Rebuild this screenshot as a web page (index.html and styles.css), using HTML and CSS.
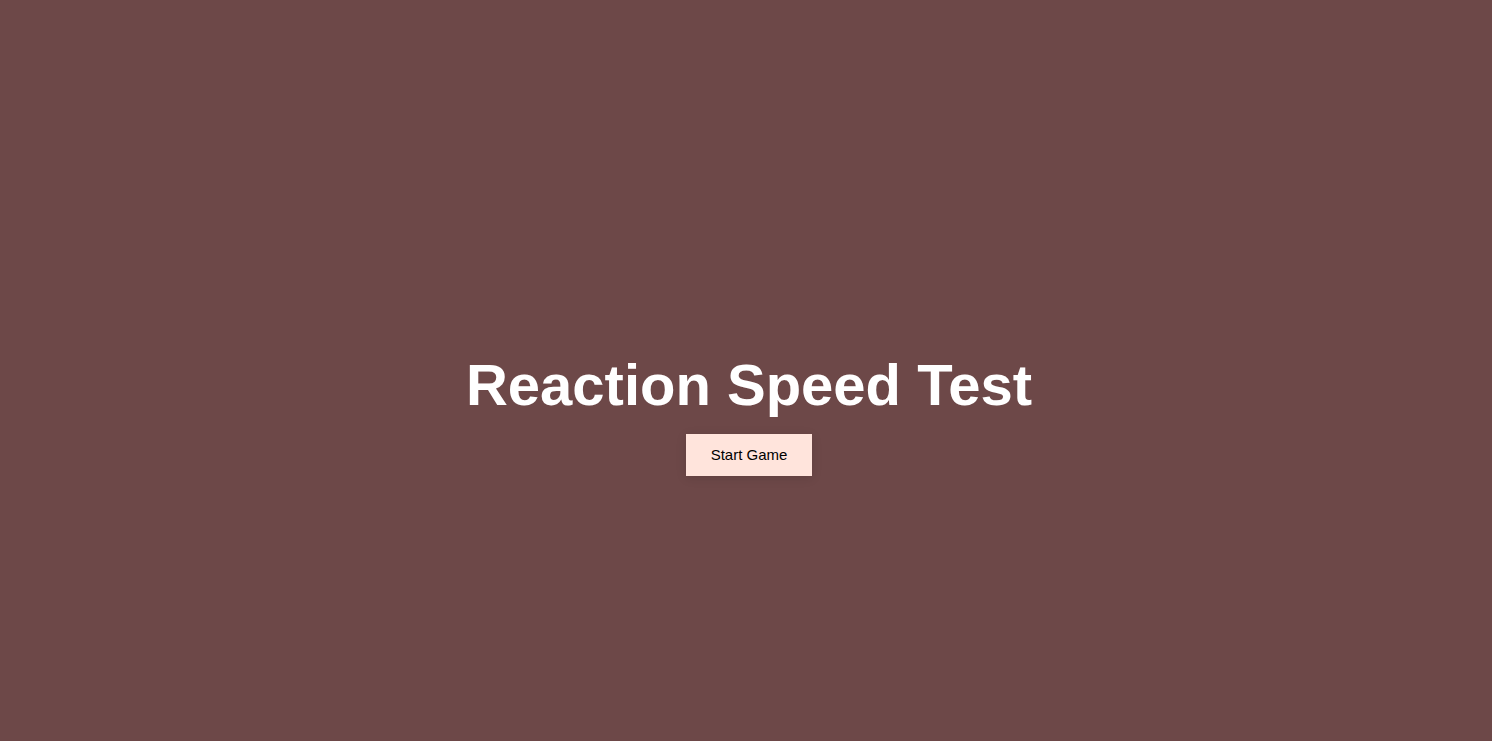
FILE: index.html
```html
<!DOCTYPE html>
<html>
<head>
<meta charset="utf-8">
<link rel="stylesheet" href="styles.css">
</head>
<body>
<main class="screen">
  <h1 class="title">Reaction Speed Test</h1>
  <button class="start-btn">Start Game</button>
</main>
</body>
</html>
```

FILE: styles.css
```css
html, body {
  margin: 0;
  padding: 0;
}
body {
  background: #6d4848;
  font-family: "Liberation Sans", Arial, sans-serif;
}
.screen {
  box-sizing: border-box;
  min-height: 100vh;
  display: flex;
  flex-direction: column;
  align-items: center;
  justify-content: center;
  padding-top: 86px;
  padding-left: 6px;
}
.title {
  margin: 0 0 16px;
  font-size: 58px;
  font-weight: bold;
  color: #ffffff;
}
.start-btn {
  font-family: "Liberation Sans", Arial, sans-serif;
  font-size: 15px;
  line-height: 18px;
  color: #000;
  background: #ffe4dc;
  border: none;
  padding: 12px 25px;
  box-shadow: 0 2px 10px rgba(0,0,0,0.12);
}
```
